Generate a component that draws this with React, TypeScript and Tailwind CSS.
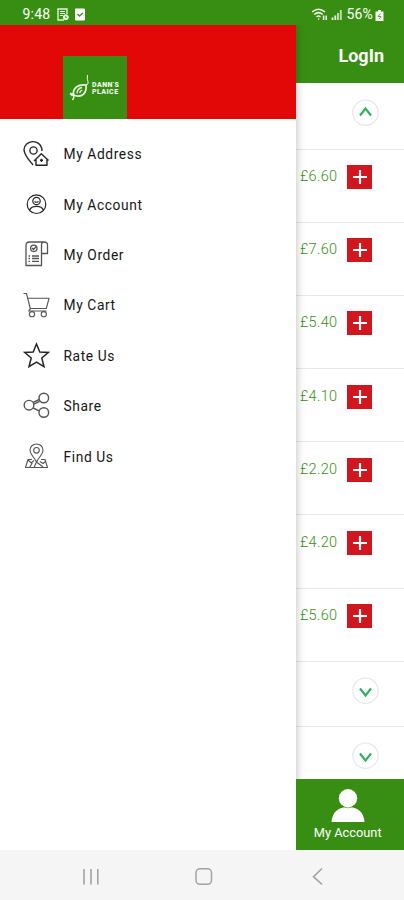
import type { ReactNode } from 'react'

interface MenuItem {
    label: string
    icon: ReactNode
}

const menuItems: MenuItem[] = [
    {
        label: 'My Address',
        icon: (
            <g strokeWidth="1.4">
                <path d="M11 25 C7 20 2 15 2 9.5 A9 8.5 0 0 1 19.8 8.5 L20 11" />
                <circle cx="11.5" cy="10.5" r="3.6" />
                <path d="M12 21 L19.3 13.8 L26.5 20.5 M14 19.5 V25.3 H25 V19.5" />
                <path d="M19.5 18.7 V22 M18 20.3 H21" />
            </g>
        ),
    },
    {
        label: 'My Account',
        icon: (
            <g strokeWidth="1.2">
                <circle cx="14.5" cy="13.2" r="9.3" />
                <circle cx="14.5" cy="10" r="3.7" />
                <path d="M12.5 10.5 Q14.5 12 16.5 10.5 M7.5 19.2 C9 15.7 12 15.4 14.5 15.4 S20 15.7 21.5 19.2" />
            </g>
        ),
    },
    {
        label: 'My Order',
        icon: (
            <g strokeWidth="1.3" stroke="#555">
                <path d="M19.5 12.5 V24.5 H4 V4.5 Q4 1 7 1 H22 Q25.5 1 25.5 4 V12.5 H19.5 V4 Q19.5 1 22 1" />
                <circle cx="11.8" cy="7.3" r="3.2" />
                <path d="M10 7 L11.5 8.5 L14 5.8 M6.5 15 H8 M10 15 H17 M6.5 17.5 H8 M10 17.5 H17 M6.5 20.3 H8 M10 20.3 H17" />
            </g>
        ),
    },
    {
        label: 'My Cart',
        icon: (
            <g strokeWidth="1.1" stroke="#555">
                <path d="M1.5 1.5 H4.5 L8.5 17.5 M5.8 6.3 H27 L24.3 16.5 H8.2 L6.7 19 H24.5" />
                <circle cx="10" cy="22.2" r="2.6" />
                <circle cx="21.8" cy="22.2" r="2.6" />
            </g>
        ),
    },
    {
        label: 'Rate Us',
        icon: (
            <path
                strokeWidth="1.5"
                strokeLinejoin="miter"
                d="M14.5 2 L17.8 10 L26.3 10.5 L19.8 16 L22 24.7 L14.5 20.2 L7 24.7 L9.2 16 L2.7 10.5 L11.2 10 Z"
            />
        ),
    },
    {
        label: 'Share',
        icon: (
            <g strokeWidth="1.4" stroke="#555">
                <circle cx="7" cy="13.2" r="4.8" />
                <circle cx="21.8" cy="6" r="4.8" />
                <circle cx="21.8" cy="20.5" r="4.8" />
                <path d="M11.2 10.4 L17.3 7.5 M11.9 12.2 L17.6 9.4 M11.2 16 L17 18.8" />
            </g>
        ),
    },
    {
        label: 'Find Us',
        icon: (
            <g strokeWidth="1.1" stroke="#555">
                <path d="M14.5 19 C12.5 14.5 8 11.5 8 7 A6.5 6 0 0 1 21 7 C21 11.5 16.5 14.5 14.5 19 Z" />
                <circle cx="14.5" cy="7.3" r="2.8" />
                <path d="M10 16.5 H6 L3.5 24.5 H25.5 L23 16.5 H19 M6 17 L10 20.5 L7.5 24.5 M9 20 L12 17.5 M12 24.5 L14.5 19 L21 24 M18 18.5 L21 20.5 L23.5 18.5" />
            </g>
        ),
    },
]

const prices = ['£6.60', '£7.60', '£5.40', '£4.10', '£2.20', '£4.20', '£5.60']

function StatusBar() {
    return (
        <header className="z-20 flex h-[25px] shrink-0 items-center bg-[#388e12] pt-[4px] pr-[20px] pl-[22.5px] text-[14px] text-white">
            <span className="w-[34px] tracking-[0.2px]">9:48</span>
            <svg className="h-[13px] w-[12px]" viewBox="0 0 12 13" fill="none" stroke="#e4f2dd">
                <path d="M7 12 H1 V1 H10 V6" strokeWidth="1.4" />
                <path d="M3 3.5 H8 M3 5.5 H8 M3 7.5 H6" />
                <circle cx="8.8" cy="9.2" r="2.5" fill="#e4f2dd" />
                <path d="M8.7 8 V9.5 H10" stroke="#388e12" strokeWidth="0.8" />
            </svg>
            <svg className="ml-[6px] h-[13px] w-[10px]" viewBox="0 0 10 13">
                <rect y="0.5" width="10" height="12" rx="1" fill="#fff" />
                <path d="M2.5 6 L4.5 8 L7.8 5" fill="none" stroke="#388e12" strokeWidth="1.3" />
            </svg>
            <svg className="ml-auto h-[13px] w-[34px]" viewBox="0 0 34 13" fill="none" stroke="#f0f8ec">
                <path d="M0 4 Q6.5 -1.5 13 4 M2.2 6.5 Q6.5 2.8 10.8 6.5 M4.5 8.8 Q6.5 7.2 8.5 8.8" strokeWidth="1.5" />
                <path d="M6.2 10.8 L7.2 11.2 M11.6 7.5 V12 M14.2 7.5 V12" strokeWidth="1.5" />
                <path d="M20.5 9.5 V12 M23.3 7.5 V12" strokeWidth="1.8" />
                <path d="M26 5 V12 M28.8 2 V12" strokeWidth="1.9" stroke="#c2dfb5" />
            </svg>
            <span className="ml-[1px] w-[28.5px] text-[14px] tracking-[0.1px]">56%</span>
            <svg className="h-[12px] w-[9px]" viewBox="0 0 9 12">
                <path d="M3 1 H6 V2.5 H8.5 V12 H0.5 V2.5 H3 Z" fill="#f4faf1" />
                <path d="M5.5 4.5 L3 7.5 H6 L4 10" fill="none" stroke="#388e12" strokeWidth="0.8" />
            </svg>
        </header>
    )
}

function Logo() {
    return (
        <div className="flex h-[63px] w-[64px] items-center bg-[#388e12] pl-[6px]">
            <svg className="h-[30px] w-[21px] shrink-0" viewBox="0 0 21 30" fill="none" stroke="#e9f5e4">
                <path d="M4.5 22 C3.5 15 9 11 17 12 C18 20 13 25 6 22.5 Z" strokeWidth="1.7" />
                <path d="M1 20.5 Q4 20 5 22.5 Q5 25 3.5 27 M1 20.5 L3.5 23" strokeWidth="1.5" />
                <path d="M8 20.5 Q8 15.5 13 14.5 M11 20 Q10.5 18 13.5 17" strokeWidth="1.3" />
                <path d="M17 12 Q20 11.5 19 8.5 Q17.8 7 18.5 2" strokeWidth="1" />
            </svg>
            <div className="mt-[3px] ml-[2px] flex flex-col text-[7px] leading-[7px] font-black tracking-[0.45px] text-[#eef7ea]">
                <span className="block h-[7px] overflow-hidden">DANN'S</span>
                <span className="block h-[7px] overflow-hidden">PLAICE</span>
            </div>
        </div>
    )
}

function Drawer() {
    return (
        <nav className="z-10 w-[295.5px] shrink-0 bg-white shadow-[0_0_9px_rgba(0,0,0,0.28)]">
            <div className="flex h-[94px] items-end bg-[#e20808] pl-[63px]">
                <Logo />
            </div>
            <ul className="pt-[10px]">
                {menuItems.map((item) => (
                    <li key={item.label} className="flex h-[50.45px] items-center pl-[22px]">
                        <svg
                            className="h-[28px] w-[28px]"
                            viewBox="0 0 28 28"
                            fill="none"
                            stroke="#262626"
                            strokeLinejoin="round"
                        >
                            {item.icon}
                        </svg>
                        <span className="pt-[0.5px] pl-[13.5px] text-[13.8px] tracking-[0.6px] text-[#161616]">
                            {item.label}
                        </span>
                    </li>
                ))}
            </ul>
        </nav>
    )
}

function ChevronBadge({ up = false }: { up?: boolean }) {
    return (
        <svg className="ml-[56px] h-[28px] w-[28px]" viewBox="0 0 28 28" fill="none">
            <circle cx="13.5" cy="13.7" r="12.7" stroke="#e5e7e8" strokeWidth="1.2" />
            <path
                d={up ? 'M8 16.5 L13.5 9.5 L19 16.5' : 'M8 11.5 L13.5 18.5 L19 11.5'}
                stroke="#2eb35c"
                strokeWidth="2.1"
            />
        </svg>
    )
}

function PriceList() {
    return (
        <main className="flex w-[108.5px] flex-col">
            <div className="h-[58px] shrink-0 bg-[#388e12] pt-[19px] pr-[20px] text-right text-[18px] leading-[24px] font-bold text-white">
                LogIn
            </div>
            <div className="h-[66.5px] shrink-0 border-b-[1.5px] border-[#e9e9e9] pt-[16px]">
                <ChevronBadge up />
            </div>
            {prices.map((price) => (
                <div
                    key={price}
                    className="flex h-[73.2px] shrink-0 items-start border-b-[1.5px] border-[#e9e9e9] pt-[15.5px] pl-[4.5px]"
                >
                    <span className="w-[47px] text-[14.5px] leading-[24px] font-light tracking-[0.3px] text-[#388e12]">
                        {price}
                    </span>
                    <span className="flex h-[24px] w-[25px] items-center justify-center bg-[#d0161e]">
                        <svg className="h-[14px] w-[14px]" viewBox="0 0 14 14">
                            <path d="M7 0 V14 M0 7 H14" stroke="#fff" strokeWidth="2.2" />
                        </svg>
                    </span>
                </div>
            ))}
            <div className="h-[65px] shrink-0 border-b-[1.5px] border-[#e9e9e9] pt-[15px]">
                <ChevronBadge />
            </div>
            <div className="min-h-0 flex-1 pt-[15px]">
                <ChevronBadge />
            </div>
            <footer className="z-20 flex h-[71px] shrink-0 flex-col items-center bg-[#388e12] pt-[10px] pr-[4px] text-white">
                <svg className="h-[33px] w-[34px]" viewBox="0 0 34 33">
                    <path d="M0.5 33 C1 23.5 7 18 17 18 S33 23.5 33.5 33 Z" fill="#fff" />
                    <circle cx="17" cy="9.3" r="9.2" fill="#fff" />
                    <path d="M10.5 16.2 Q17 21.5 23.5 16.2" fill="none" stroke="#388e12" strokeWidth="0.6" />
                </svg>
                <span className="mt-[3px] text-[12.8px] leading-[15px]">My Account</span>
            </footer>
        </main>
    )
}

function SystemNav() {
    return (
        <footer className="z-20 flex h-[50px] shrink-0 items-center bg-[#f5f5f5]">
            <svg className="h-[50px] w-[404px]" viewBox="0 0 404 50" fill="none" stroke="#a2a2a2">
                <path d="M84 19 V34.5 M91 19 V34.5 M97.8 19 V34.5" strokeWidth="1.6" />
                <rect x="196" y="18.8" width="15.5" height="15.5" rx="4" strokeWidth="1.5" />
                <path d="M322 18.5 L313.5 26.7 L322 34.5" strokeWidth="1.6" />
            </svg>
        </footer>
    )
}

export default function App() {
    return (
        <div className="flex h-[900px] w-[404px] flex-col overflow-hidden bg-white font-['Roboto',sans-serif]">
            <StatusBar />
            <div className="flex h-[825px]">
                <Drawer />
                <PriceList />
            </div>
            <SystemNav />
        </div>
    )
}
